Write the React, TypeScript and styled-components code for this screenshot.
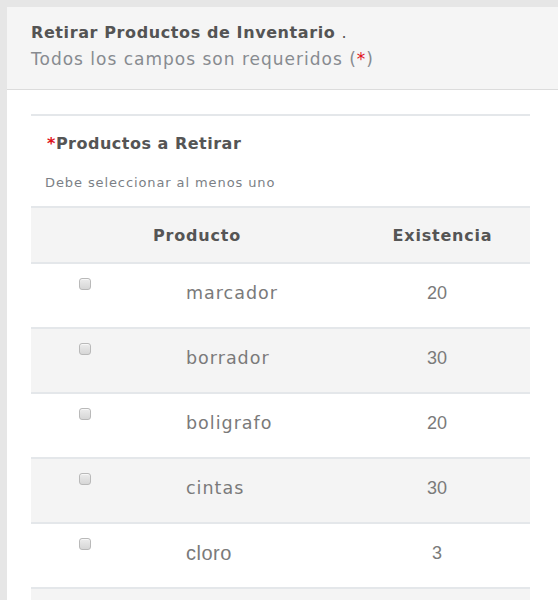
import React from "react";
import styled, { createGlobalStyle } from "styled-components";

const GlobalStyle = createGlobalStyle`
  html, body { margin: 0; padding: 0; }
  body {
    background: #e6e6e6;
    font-family: "DejaVu Sans", "Noto Sans", sans-serif;
    overflow: hidden;
  }
`;

const Page = styled.div`
  padding: 7px 0 0 7px;
  width: 558px;
  box-sizing: border-box;
`;

const Panel = styled.div`
  background: #fff;
  min-height: 600px;
`;

const Header = styled.div`
  background: #f5f5f5;
  border-bottom: 1px solid #dcdcdc;
  padding: 14px 24px 11px;
  height: 83px;
  box-sizing: border-box;
`;

const Title = styled.div`
  font-size: 16px;
  font-weight: 700;
  color: #545454;
  line-height: 24px;
  letter-spacing: 0.6px;
  span { font-weight: 400; }
`;

const Subtitle = styled.div`
  font-size: 17px;
  color: #878b90;
  line-height: 26px;
  margin-top: 1px;
  letter-spacing: 1px;
`;

const Req = styled.span`
  color: #e0101a;
`;

const Body = styled.div`
  padding: 24px 28px 0 24px;
`;

const Section = styled.div`
  border-top: 2px solid #e4e7ea;
`;

const Label = styled.div`
  padding: 16px 16px 0;
  font-size: 16px;
  font-weight: 700;
  color: #555;
  line-height: 24px;
  letter-spacing: 0.5px;
`;

const Hint = styled.div`
  padding: 18px 14px 0;
  font-size: 13px;
  color: #7b7f86;
  line-height: 18px;
  letter-spacing: 0.9px;
`;

const Table = styled.div`
  margin-top: 14px;
`;

const HeadRow = styled.div`
  display: grid;
  grid-template-columns: 332px 1fr;
  height: 58px;
  align-items: center;
  background: #f4f4f4;
  border-top: 2px solid #e4e7ea;
  border-bottom: 2px solid #e4e7ea;
  box-sizing: border-box;
`;

const Th = styled.div<{ $pr?: number }>`
  text-align: center;
  font-size: 16px;
  font-weight: 700;
  color: #555;
  letter-spacing: 0.8px;
  padding-right: ${(p) => p.$pr ?? 0}px;
`;

const Row = styled.div<{ $alt: boolean }>`
  display: grid;
  grid-template-columns: 124px 189px 1fr;
  height: 65px;
  box-sizing: border-box;
  border-bottom: 2px solid #e4e7ea;
  background: ${(p) => (p.$alt ? "#f4f4f4" : "#fff")};
  color: #7a7a7a;
  line-height: 24px;
`;

const CheckCell = styled.div`
  padding: 14px 0 0 48px;
`;

const Check = styled.span`
  display: block;
  width: 12px;
  height: 12px;
  box-sizing: border-box;
  border: 1px solid #b9b9b9;
  border-radius: 3px;
  background: linear-gradient(#ececec, #d6d6d6);
  box-shadow: inset 0 1px 0 rgba(255, 255, 255, 0.6);
`;

const NameCell = styled.div<{ $plain?: boolean }>`
  padding: 17px 0 0 31px;
  font-size: ${(p) => (p.$plain ? 20 : 17.5)}px;
  letter-spacing: ${(p) => (p.$plain ? 0.5 : 1)}px;
  font-family: ${(p) =>
    p.$plain ? '"Liberation Sans", Arial, sans-serif' : '"DejaVu Sans", "Noto Sans", sans-serif'};
`;

const NumCell = styled.div`
  padding-top: 17px;
  text-align: center;
  font-size: 18px;
  font-family: "Liberation Sans", Arial, sans-serif;
`;

const Filler = styled.div`
  height: 20px;
  background: #f4f4f4;
`;

const rows = [
  { name: "marcador", qty: 20 },
  { name: "borrador", qty: 30 },
  { name: "boligrafo", qty: 20 },
  { name: "cintas", qty: 30 },
  { name: "cloro", qty: 3, plain: true },
];

export default function App() {
  return (
    <>
      <GlobalStyle />
      <Page>
        <Panel>
          <Header>
            <Title>
              Retirar Productos de Inventario <span>.</span>
            </Title>
            <Subtitle>
              Todos los campos son requeridos (<Req>*</Req>)
            </Subtitle>
          </Header>
          <Body>
            <Section>
              <Label>
                <Req>*</Req>Productos a Retirar
              </Label>
              <Hint>Debe seleccionar al menos uno</Hint>
              <Table>
                <HeadRow>
                  <Th>Producto</Th>
                  <Th $pr={8}>Existencia</Th>
                </HeadRow>
                {rows.map((r, i) => (
                  <Row key={r.name} $alt={i % 2 === 1}>
                    <CheckCell>
                      <Check />
                    </CheckCell>
                    <NameCell $plain={r.plain}>{r.name}</NameCell>
                    <NumCell>{r.qty}</NumCell>
                  </Row>
                ))}
                <Filler />
              </Table>
            </Section>
          </Body>
        </Panel>
      </Page>
    </>
  );
}
